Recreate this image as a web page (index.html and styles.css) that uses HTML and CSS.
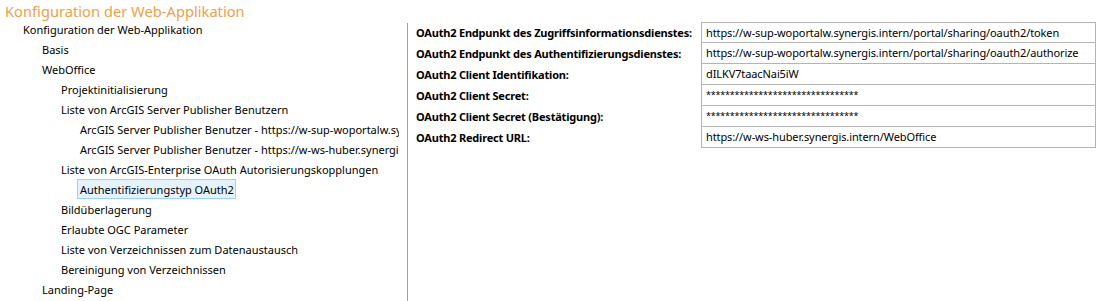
FILE: index.html
```html
<!DOCTYPE html>
<html lang="de">
<head>
    <meta charset="UTF-8">
    <title>Konfiguration der Web-Applikation</title>
    <link rel="stylesheet" href="styles.css">
</head>
<body>
    <h1 class="page-title">Konfiguration der Web-Applikation</h1>
    <div class="main">
        <div class="tree">
            <ul class="level">
                <li><span class="node">Konfiguration der Web-Applikation</span>
                    <ul class="level">
                        <li><span class="node">Basis</span></li>
                        <li><span class="node">WebOffice</span>
                            <ul class="level">
                                <li><span class="node">Projektinitialisierung</span></li>
                                <li><span class="node">Liste von ArcGIS Server Publisher Benutzern</span>
                                    <ul class="level">
                                        <li><span class="node">ArcGIS Server Publisher Benutzer - https://w-sup-woportalw.synergis.intern/portal</span></li>
                                        <li><span class="node">ArcGIS Server Publisher Benutzer - https://w-ws-huber.synergis.i</span></li>
                                    </ul>
                                </li>
                                <li><span class="node">Liste von ArcGIS-Enterprise OAuth Autorisierungskopplungen</span>
                                    <ul class="level">
                                        <li><span class="node selected">Authentifizierungstyp OAuth2</span></li>
                                    </ul>
                                </li>
                                <li><span class="node">Bildüberlagerung</span></li>
                                <li><span class="node">Erlaubte OGC Parameter</span></li>
                                <li><span class="node">Liste von Verzeichnissen zum Datenaustausch</span></li>
                                <li><span class="node">Bereinigung von Verzeichnissen</span></li>
                            </ul>
                        </li>
                        <li><span class="node">Landing-Page</span></li>
                    </ul>
                </li>
            </ul>
        </div>

        <div class="details">
            <div class="form-grid">
                <div class="label">OAuth2 Endpunkt des Zugriffsinformationsdienstes:</div>
                <div class="value">https://w-sup-woportalw.synergis.intern/portal/sharing/oauth2/token</div>

                <div class="label">OAuth2 Endpunkt des Authentifizierungsdienstes:</div>
                <div class="value">https://w-sup-woportalw.synergis.intern/portal/sharing/oauth2/authorize</div>

                <div class="label">OAuth2 Client Identifikation:</div>
                <div class="value">dILKV7taacNai5iW</div>

                <div class="label">OAuth2 Client Secret:</div>
                <div class="value secret">********************************</div>

                <div class="label">OAuth2 Client Secret (Bestätigung):</div>
                <div class="value secret">********************************</div>

                <div class="label">OAuth2 Redirect URL:</div>
                <div class="value">https://w-ws-huber.synergis.intern/WebOffice</div>
            </div>
        </div>
    </div>
</body>
</html>
```

FILE: styles.css
```css
body {
    margin: 0;
    font-family: 'Noto Sans', 'Open Sans', sans-serif;
    font-size: 11px;
    color: #000;
    background: #fff;
    height: 301px;
    overflow: hidden;
}

.page-title {
    margin: 0;
    padding-left: 5px;
    height: 20px;
    line-height: 22px;
    font-size: 14.7px;
    font-weight: normal;
    color: #f0a04b;
    white-space: nowrap;
}

.main {
    display: flex;
    height: 281px;
}

/* Tree */
.tree {
    width: 399px;
    margin-top: -1px;
    margin-right: 8px;
    overflow: hidden;
}

.level {
    list-style: none;
    margin: 0;
    padding: 0 0 0 19px;
}

.tree > .level {
    padding-left: 20px;
}

.node {
    display: inline-block;
    height: 20px;
    line-height: 19px;
    padding: 0 2px;
    white-space: nowrap;
    border: 1px solid transparent;
    box-sizing: border-box;
    vertical-align: top;
}

.tree li {
    white-space: nowrap;
}

.node.selected {
    background: #e5f3ff;
    border-color: #99d1ff;
    padding-right: 1px;
}

/* Details */
.details {
    flex: 1;
    border-left: 1px solid #a0a0a0;
    margin-top: 3px;
    padding-left: 8px;
}

.form-grid {
    display: grid;
    grid-template-columns: 285px 395px;
    grid-auto-rows: 21px;
    margin-top: -1px;
}

.label {
    font-weight: bold;
    letter-spacing: -0.2px;
    line-height: 20px;
    padding-top: 1px;
    white-space: nowrap;
}

.value {
    border: 1px solid #b4b4b4;
    border-top: none;
    padding-left: 4px;
    line-height: 20px;
    letter-spacing: -0.1px;
    white-space: nowrap;
    overflow: hidden;
}

.form-grid > .value:nth-child(2) {
    border-top: 1px solid #b4b4b4;
}

.value.secret {
    font-size: 9px;
    letter-spacing: -0.2px;
}
```
